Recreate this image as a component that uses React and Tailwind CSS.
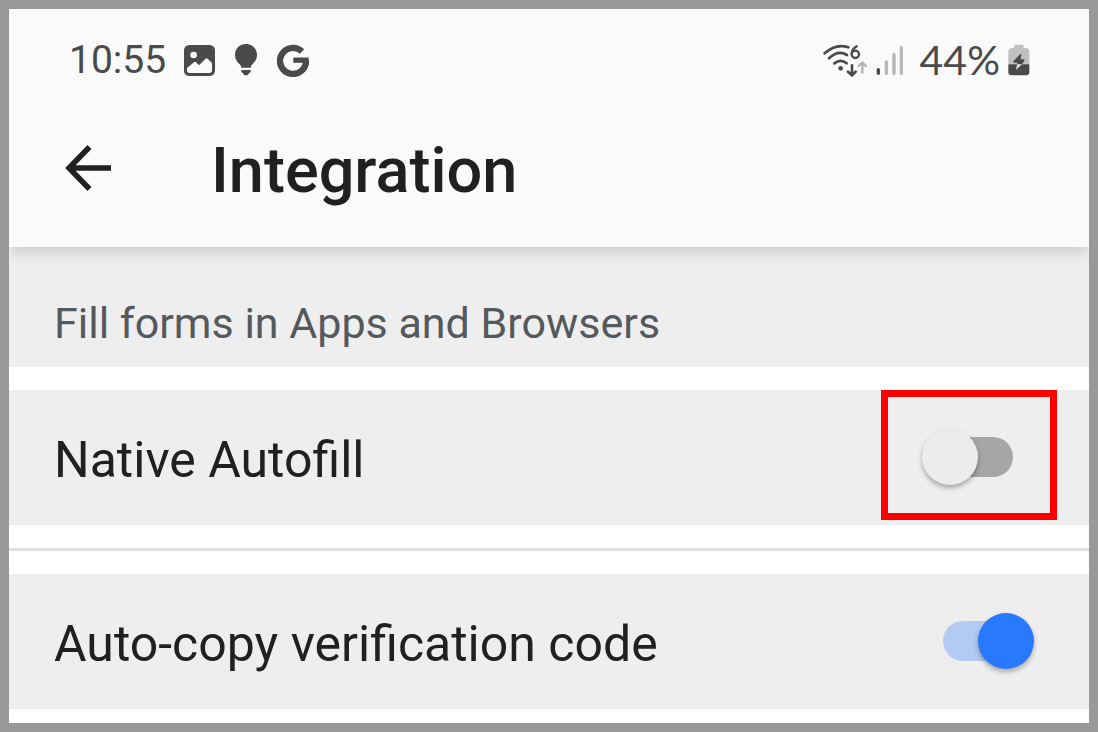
import { useState } from "react";

function PictureIcon() {
  return (
    <svg viewBox="0 0 93 93" className="h-[31px] w-[31px]" aria-hidden="true">
      <rect width="93" height="93" rx="16" fill="#4a4a4a" />
      <circle cx="29" cy="30" r="10" fill="#fafafa" />
      <path d="M9 69 L31 51 Q33 49 35 51 L45 61 L65 41 Q68 38 71 41 L84 54 V76 Q84 84 76 84 H17 Q9 84 9 76 Z" fill="#fafafa" />
    </svg>
  );
}

function BulbIcon() {
  return (
    <svg viewBox="0 0 66 96" className="h-8 w-[22px]" aria-hidden="true">
      <path d="M33 0 C14 0 0 14 0 33 C0 45 6 54 14 61 C17 64 18 67 19 71 H47 C48 67 49 64 52 61 C60 54 66 45 66 33 C66 14 52 0 33 0 Z" fill="#4a4a4a" />
      <path d="M19 78 H47 V83 Q47 86 44 86 H42 Q41 94 33 94 Q25 94 24 86 H22 Q19 86 19 83 Z" fill="#4a4a4a" />
    </svg>
  );
}

function LetterMarkIcon() {
  return (
    <svg viewBox="0 0 96 98" className="h-[33px] w-8" fill="none" stroke="#4a4a4a" aria-hidden="true">
      <path d="M75 22 A39 39 0 1 0 87 48" strokeWidth="19" />
      <path d="M49 48 H95" strokeWidth="16" />
    </svg>
  );
}

function WifiIcon() {
  return (
    <svg viewBox="36 40 135 99" className="h-[33px] w-[45px]" fill="none" strokeLinecap="round" aria-hidden="true">
      <g stroke="#4a4a4a">
        <path d="M41 68 Q75 37 112 50" strokeWidth="8" />
        <path d="M54 83 Q82 57 108 73" strokeWidth="8" />
        <path d="M70 98 Q89 83 107 98" strokeWidth="8" />
        <path d="M137 47 Q122 56 122 70" strokeWidth="7" />
        <circle cx="133" cy="71" r="11" strokeWidth="7" />
        <path d="M123 104 V133 M111 123 L123 134 L134 123" strokeWidth="8" />
      </g>
      <circle cx="89" cy="113" r="7" fill="#4a4a4a" />
      <path d="M154 126 V97 M143 106 L154 96 L165 106" stroke="#b2b2b2" strokeWidth="7" />
    </svg>
  );
}

function SignalIcon() {
  return (
    <svg viewBox="196 42 84 93" className="h-[31px] w-7" strokeLinecap="round" strokeWidth="10" aria-hidden="true">
      <path d="M203 116 V127" stroke="#4a4a4a" />
      <path d="M227 93 V127 M250 71 V127 M272 50 V127" stroke="#b7b7b7" />
    </svg>
  );
}

function BatteryIcon() {
  return (
    <svg viewBox="593 42 66 96" className="h-8 w-[22px]" aria-hidden="true">
      <path d="M611 54 V49 Q611 44 616 44 H635 Q640 44 640 49 V54 H646 Q657 54 657 65 V103 H594 V65 Q594 54 605 54 Z" fill="#c0c0c0" />
      <path d="M594 103 H657 V126 Q657 136 647 136 H604 Q594 136 594 126 Z" fill="#4a4a4a" />
      <path d="M630 72 L609 94 Q608 98 612 98 H622 L620 103 H635 L643 91 Q643 88 639 88 H630 L634 75 Z" fill="#4a4a4a" />
      <path d="M620 103 H635 L617 120 Z" fill="#dedede" />
    </svg>
  );
}

function BackIcon() {
  return (
    <svg viewBox="0 0 46 46" className="h-[46px] w-[46px]" fill="none" stroke="#202020" strokeWidth="5.500" aria-hidden="true">
      <path d="M24.500 2 L4 23 L24.500 44 M4 23 H46" />
    </svg>
  );
}

function Toggle({ id, checked, onChange }) {
  return (
    <span className="relative flex h-14 w-[91px] shrink-0 items-center">
      <input
        id={id}
        type="checkbox"
        role="switch"
        checked={checked}
        onChange={(e) => onChange(e.target.checked)}
        className="peer absolute inset-0 z-10 m-0 h-full w-full cursor-pointer opacity-0"
      />
      <span className="mr-0 ml-2 h-10 flex-1 rounded-full bg-[#a6a6a6] peer-checked:mr-2 peer-checked:ml-0 peer-checked:bg-[#b3caf3]" />
      <span className="absolute top-0 left-0 size-14 rounded-full bg-[#ececec] shadow-[0_3px_5px_rgba(0,0,0,0.3)] peer-checked:right-0 peer-checked:left-auto peer-checked:bg-[#2979fc]" />
    </span>
  );
}

export default function App() {
  const [autofill, setAutofill] = useState(false);
  const [autoCopy, setAutoCopy] = useState(true);

  return (
    <div className="min-h-screen border-9 border-[#999999] bg-white font-[Roboto,sans-serif] text-[#202020]">
      <header className="relative h-[238px] bg-[#fafafa] shadow-[0_4px_14px_rgba(0,0,0,0.16)] [clip-path:inset(0_0_-24px_0)]">
        <div className="flex items-center justify-between pt-7 pr-[59px] pl-[60px] text-[#4a4a4a]">
          <div className="flex items-center">
            <span className="mr-[18px] text-[39px] leading-[46px]">10:55</span>
            <span className="mr-5"><PictureIcon /></span>
            <span className="mr-5"><BulbIcon /></span>
            <LetterMarkIcon />
          </div>
          <div className="flex items-center">
            <span className="mr-2"><WifiIcon /></span>
            <span className="mr-4"><SignalIcon /></span>
            <span className="mr-2 font-[Lato,sans-serif] text-[41px] leading-[46px]">44%</span>
            <BatteryIcon />
          </div>
        </div>
        <div className="flex items-start pt-12 pl-14">
          <button type="button" aria-label="Back" className="mt-[14px] cursor-pointer">
            <BackIcon />
          </button>
          <h1 className="ml-[100px] text-[63px] leading-[80px] font-medium">Integration</h1>
        </div>
      </header>

      <main>
        <h2 className="flex h-[120px] items-end bg-[#eeeeee] px-[45px] pb-[18px] text-[43px] leading-[52px] text-[#55595c]">
          Fill forms in Apps and Browsers
        </h2>

        <div className="py-[23px]">
          <div className="relative flex h-[135px] items-center justify-between bg-[#eeeeee] pr-[76px] pb-[2px] pl-[45px]">
            <label htmlFor="native-autofill" className="pt-[6px] text-[50px] leading-[60px]">Native Autofill</label>
            <Toggle id="native-autofill" checked={autofill} onChange={setAutofill} />
            <span className="pointer-events-none absolute top-0 right-8 h-[130px] w-[176px] border-7 border-[#ff0000]" />
          </div>
        </div>

        <div className="border-t-3 border-[#e0e0e0] pt-[23px]">
          <div className="flex h-[135px] items-center justify-between bg-[#eeeeee] pr-[55px] pb-[2px] pl-[45px]">
            <label htmlFor="auto-copy" className="pt-[6px] text-[50px] leading-[60px]">Auto-copy verification code</label>
            <Toggle id="auto-copy" checked={autoCopy} onChange={setAutoCopy} />
          </div>
        </div>
      </main>
    </div>
  );
}
